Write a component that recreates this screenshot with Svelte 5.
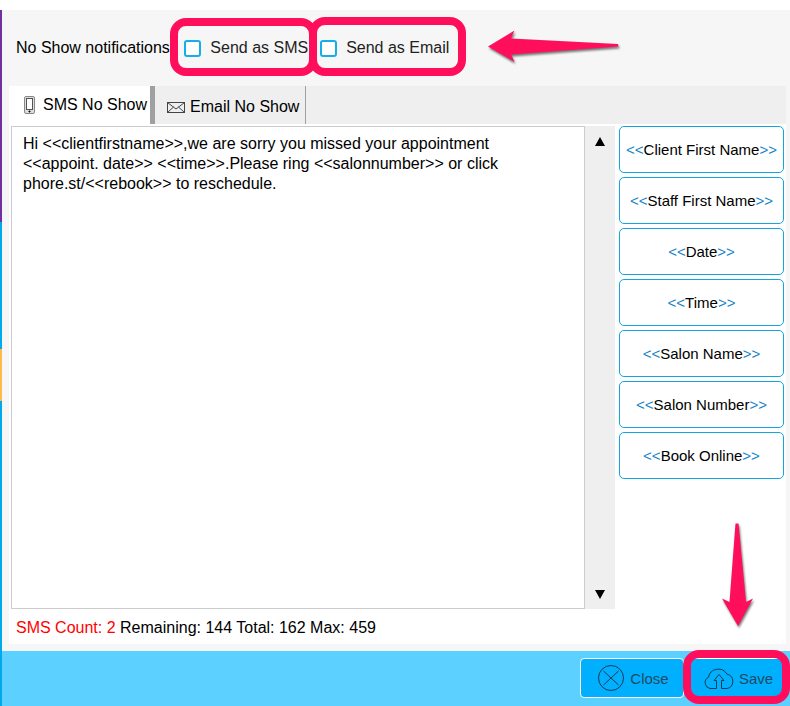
<script>
  let sendSms = false;
  let sendEmail = false;
  let activeTab = 'sms';
  let editor;
  let message = [
    'Hi <<clientfirstname>>,we are sorry you missed your appointment',
    '<<appoint. date>> <<time>>.Please ring <<salonnumber>> or click',
    'phore.st/<<rebook>> to reschedule.'
  ].join('\n');

  const tags = [
    'Client First Name',
    'Staff First Name',
    'Date',
    'Time',
    'Salon Name',
    'Salon Number',
    'Book Online'
  ];

  function insertTag(tag) {
    const at = editor.selectionStart;
    message = message.slice(0, at) + '<<' + tag + '>>' + message.slice(at);
  }

  function scrollEditor(step) {
    editor.scrollTop += step;
  }
</script>

<div class="page">
  <div class="stripe" aria-hidden="true">
    <span class="purple"></span>
    <span class="blue"></span>
    <span class="orange"></span>
    <span class="blue last"></span>
  </div>

  <div class="dialog">
    <header>
      <span class="title">No Show notifications:</span>
      <label class="option option-sms">
        <input type="checkbox" bind:checked={sendSms} />
        Send as SMS
      </label>
      <label class="option option-email">
        <input type="checkbox" bind:checked={sendEmail} />
        Send as Email
      </label>
      <svg class="arrow arrow-left" width="140" height="40" viewBox="0 0 140 40" aria-hidden="true">
        <path d="M4 18.500L30.500 2.500L27 10.500L134 16L134.500 18.500L27 26.500L30.500 34Z" />
      </svg>
    </header>

    <main>
      <div class="tabs" role="tablist">
        <button
          class="tab tab-sms"
          role="tab"
          aria-selected={activeTab === 'sms'}
          on:click={() => (activeTab = 'sms')}
        >
          <svg width="12" height="18" viewBox="0 0 12 18" fill="none" stroke="#555" aria-hidden="true">
            <rect x=".5" y=".5" width="10" height="17" rx="1.500" fill="#ddd" stroke="#888" />
            <rect x="2.500" y="2.500" width="6" height="11" fill="#fff" />
            <circle cx="5.500" cy="15.500" r=".6" fill="#000" stroke="#000" />
          </svg>
          SMS No Show
        </button>
        <button
          class="tab tab-email"
          role="tab"
          aria-selected={activeTab === 'email'}
          on:click={() => (activeTab = 'email')}
        >
          <svg width="18" height="11" viewBox="0 0 18 11" fill="none" stroke="#444" aria-hidden="true">
            <rect x=".5" y=".5" width="17" height="10" />
            <path d="M.5 .5L9 7L17.500 .5M.5 10.500L6.500 5M17.500 10.500L11.500 5" />
          </svg>
          Email No Show
        </button>
      </div>

      <div class="body">
        <div class="editor">
          <textarea
            aria-label="Message"
            spellcheck="false"
            bind:this={editor}
            bind:value={message}
          ></textarea>
          <div class="scroller">
            <button aria-label="Scroll up" on:click={() => scrollEditor(-20)}>
              <svg width="10" height="9" viewBox="0 0 10 9"><path d="M5 0L10 9H0Z" /></svg>
            </button>
            <button aria-label="Scroll down" on:click={() => scrollEditor(20)}>
              <svg width="10" height="9" viewBox="0 0 10 9"><path d="M0 0H10L5 9Z" /></svg>
            </button>
          </div>
        </div>
        <div class="tags">
          {#each tags as tag}
            <button on:click={() => insertTag(tag)}>
              <i>&lt;&lt;</i>{tag}<i>&gt;&gt;</i>
            </button>
          {/each}
        </div>
      </div>

      <p class="count"><b>SMS Count: 2</b> Remaining: 144 Total: 162 Max: 459</p>
    </main>

    <footer>
      <button class="action close">
        <svg width="28" height="28" viewBox="0 0 28 28" aria-hidden="true">
          <circle cx="14" cy="14" r="12.500" />
          <path d="M6.500 7L21.500 21M21.500 7L6.500 21" />
        </svg>
        Close
      </button>
      <button class="action save">
        <svg width="32" height="24" viewBox="0 0 32 24" aria-hidden="true">
          <path d="M13.500 22.500H7A6 6 0 0 1 5.500 11.200A10 10 0 0 1 24 8.200A7.300 7.300 0 0 1 24 22.500H18.500" />
          <path d="M13.500 22.500V14.500H11L16 8.500L21 14.500H18.500V22.500" />
        </svg>
        Save
      </button>
      <svg class="arrow arrow-down" width="40" height="112" viewBox="0 0 40 112" aria-hidden="true">
        <path d="M18.500 4.500H21.500L29 83L36 79.500L21 107L5 79.500L12.500 83Z" />
      </svg>
    </footer>
  </div>
</div>

<style>
  :global(body) {
    background: #fff;
    font-family: 'Liberation Sans', Arial, sans-serif;
    font-size: 16px;
    color: #000;
  }
  .page {
    box-sizing: border-box;
    display: flex;
    min-height: 100vh;
    padding-top: 10px;
    overflow: hidden;
  }
  button {
    margin: 0;
    font: inherit;
    color: inherit;
    cursor: pointer;
  }
  .stripe {
    display: flex;
    flex-direction: column;
    width: 2px;
  }
  .purple {
    flex: 212;
    background: #7030a0;
  }
  .blue {
    flex: 127;
    background: #00a8ec;
  }
  .orange {
    flex: 52;
    background: #ffb94a;
  }
  .last {
    flex: 305;
  }
  .dialog {
    flex: 1;
    min-width: 0;
    display: flex;
    flex-direction: column;
    background: #f6f6f6;
  }
  header {
    display: flex;
    align-items: center;
    height: 76px;
    padding-left: 14px;
  }
  .title {
    margin-right: 10px;
  }
  .option {
    position: relative;
    display: flex;
    align-items: center;
    gap: 9px;
    margin-right: 12px;
    color: #222;
    white-space: nowrap;
  }
  .option input {
    appearance: none;
    box-sizing: border-box;
    width: 17px;
    height: 17px;
    margin: 0;
    border: 2px solid #14aee8;
    border-radius: 3px;
    background: #fff;
  }
  .option input:checked {
    background: #14aee8;
  }
  .option::after,
  .save::after {
    content: '';
    position: absolute;
    border: 8px solid #ff0f5b;
    border-radius: 16px;
    pointer-events: none;
  }
  .option-sms::after {
    inset: -21px -9px -19px -14px;
  }
  .option-email::after {
    inset: -22px -17px -19px -11px;
  }
  .arrow {
    fill: #ff0f5b;
    filter: drop-shadow(1px 2px 1px #0008);
    pointer-events: none;
  }
  .arrow-left {
    margin-left: 23px;
  }
  main {
    flex: 1;
    display: flex;
    flex-direction: column;
    margin: 0 4px 7px 7px;
    background: #fff;
  }
  .tabs {
    display: flex;
    height: 38px;
    background: #efefef;
  }
  .tab {
    display: flex;
    align-items: center;
    border: 0;
    background: #efefef;
    white-space: nowrap;
  }
  .tab-sms {
    gap: 7px;
    padding: 0 3px 0 15px;
    border-right: 5px solid #a0a0a0;
    background: #fff;
  }
  .tab-email {
    gap: 5px;
    padding: 4px 6px 0 12px;
    border-right: 1px solid #a0a0a0;
  }
  .body {
    flex: 1;
    display: flex;
    gap: 4px;
    padding: 2px 2px 0;
  }
  .editor {
    flex: 1;
    min-width: 0;
    display: flex;
  }
  textarea {
    flex: 1;
    min-width: 0;
    box-sizing: border-box;
    margin: 0;
    padding: 7px 11px;
    border: 1px solid #ccc;
    outline: 0;
    background: #fff;
    color: #000;
    font: inherit;
    line-height: 20px;
    resize: none;
  }
  .scroller {
    display: flex;
    flex-direction: column;
    justify-content: space-between;
    width: 30px;
    background: #efefef;
  }
  .scroller button {
    display: flex;
    align-items: center;
    justify-content: center;
    height: 30px;
    padding: 0;
    border: 0;
    background: none;
  }
  .tags {
    display: flex;
    flex-direction: column;
    gap: 4px;
    width: 165px;
  }
  .tags button {
    height: 47px;
    padding: 0;
    border: 1px solid #14a5e0;
    border-radius: 5px;
    background: #fff;
    font-size: 15px;
  }
  i {
    color: #1482c8;
    font-style: normal;
  }
  .count {
    margin: 0;
    padding: 9px 7px 6px;
    line-height: 20px;
  }
  b {
    color: #f00;
    font-weight: normal;
  }
  footer {
    position: relative;
    display: flex;
    justify-content: flex-end;
    align-items: flex-start;
    gap: 3px;
    box-sizing: border-box;
    height: 55px;
    padding: 7px 3px 0 0;
    background: #5cd0ff;
  }
  .action {
    position: relative;
    box-sizing: border-box;
    display: flex;
    align-items: center;
    justify-content: center;
    width: 104px;
    height: 40px;
    padding: 0;
    border: 1px solid #fff;
    border-radius: 4px;
    background: #00b0ff;
    color: #1f4a63;
    font-size: 15px;
  }
  .action svg {
    fill: none;
    stroke: #123a50;
  }
  .close {
    gap: 5px;
    padding-left: 2px;
  }
  .save {
    gap: 4px;
    width: 100px;
    padding-left: 2px;
  }
  .save::after {
    inset: -9px -4px -7px -5px;
  }
  .arrow-down {
    position: absolute;
    right: 33px;
    bottom: 75px;
  }
</style>
